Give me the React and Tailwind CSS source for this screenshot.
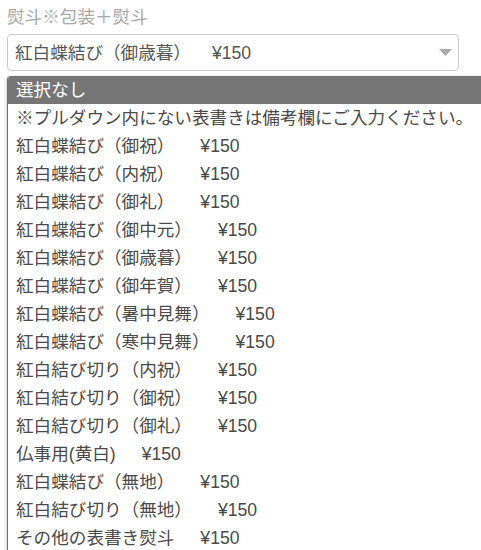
import React from "react";

const items = [
  ["紅白蝶結び（御祝）", "¥150"],
  ["紅白蝶結び（内祝）", "¥150"],
  ["紅白蝶結び（御礼）", "¥150"],
  ["紅白蝶結び（御中元）", "¥150"],
  ["紅白蝶結び（御歳暮）", "¥150"],
  ["紅白蝶結び（御年賀）", "¥150"],
  ["紅白蝶結び（暑中見舞）", "¥150"],
  ["紅白蝶結び（寒中見舞）", "¥150"],
  ["紅白結び切り（内祝）", "¥150"],
  ["紅白結び切り（御祝）", "¥150"],
  ["紅白結び切り（御礼）", "¥150"],
  ["仏事用(黄白)", "¥150"],
  ["紅白蝶結び（無地）", "¥150"],
  ["紅白結び切り（無地）", "¥150"],
  ["その他の表書き熨斗", "¥150"],
];

const font = { fontFamily: '"Liberation Sans", "Noto Sans CJK JP", sans-serif' };

export default function App() {
  return (
    <div
      className="relative w-[481px] h-[550px] overflow-hidden bg-white text-[17.6px]"
      style={font}
    >
      <div className="pl-[7px] pt-[4px] w-[459px]">
        <div className="leading-[26px] text-[#a8a8a8] whitespace-nowrap">熨斗※包装＋熨斗</div>
        <div className="mt-[4px] h-[37px] flex items-center border border-[#cccccc] rounded-[4px] bg-white pl-[7px] pr-[6px]">
          <div className="flex-1 whitespace-nowrap text-[#555555] leading-[28px]">
            <span>紅白蝶結び（御歳暮）</span>
            <span className="ml-[21px]">¥150</span>
          </div>
          <svg width="13" height="7" viewBox="0 0 13 7" className="block">
            <polygon points="0,0 13,0 6.5,7" fill="#aaaaaa" />
          </svg>
        </div>
      </div>

      <div className="absolute top-[76px] left-[7px] w-[500px] bg-white border-l border-[#6f6f6f] rounded-tl-[4px] overflow-hidden shadow-[-1px_0_3px_rgba(0,0,0,0.18)]">
        <div className="h-[28px] leading-[28px] bg-[#767676] text-white pl-[8px] whitespace-nowrap">
          選択なし
        </div>
        <div className="h-[28px] leading-[28px] text-[#4a4a4a] pl-[8px] whitespace-nowrap">
          ※プルダウン内にない表書きは備考欄にご入力ください。
        </div>
        {items.map(([label, price], i) => (
          <div
            key={i}
            className="h-[28px] leading-[28px] text-[#4a4a4a] pl-[8px] whitespace-nowrap"
          >
            <span>{label}</span>
            <span className="ml-[26px]">{price}</span>
          </div>
        ))}
      </div>
    </div>
  );
}
